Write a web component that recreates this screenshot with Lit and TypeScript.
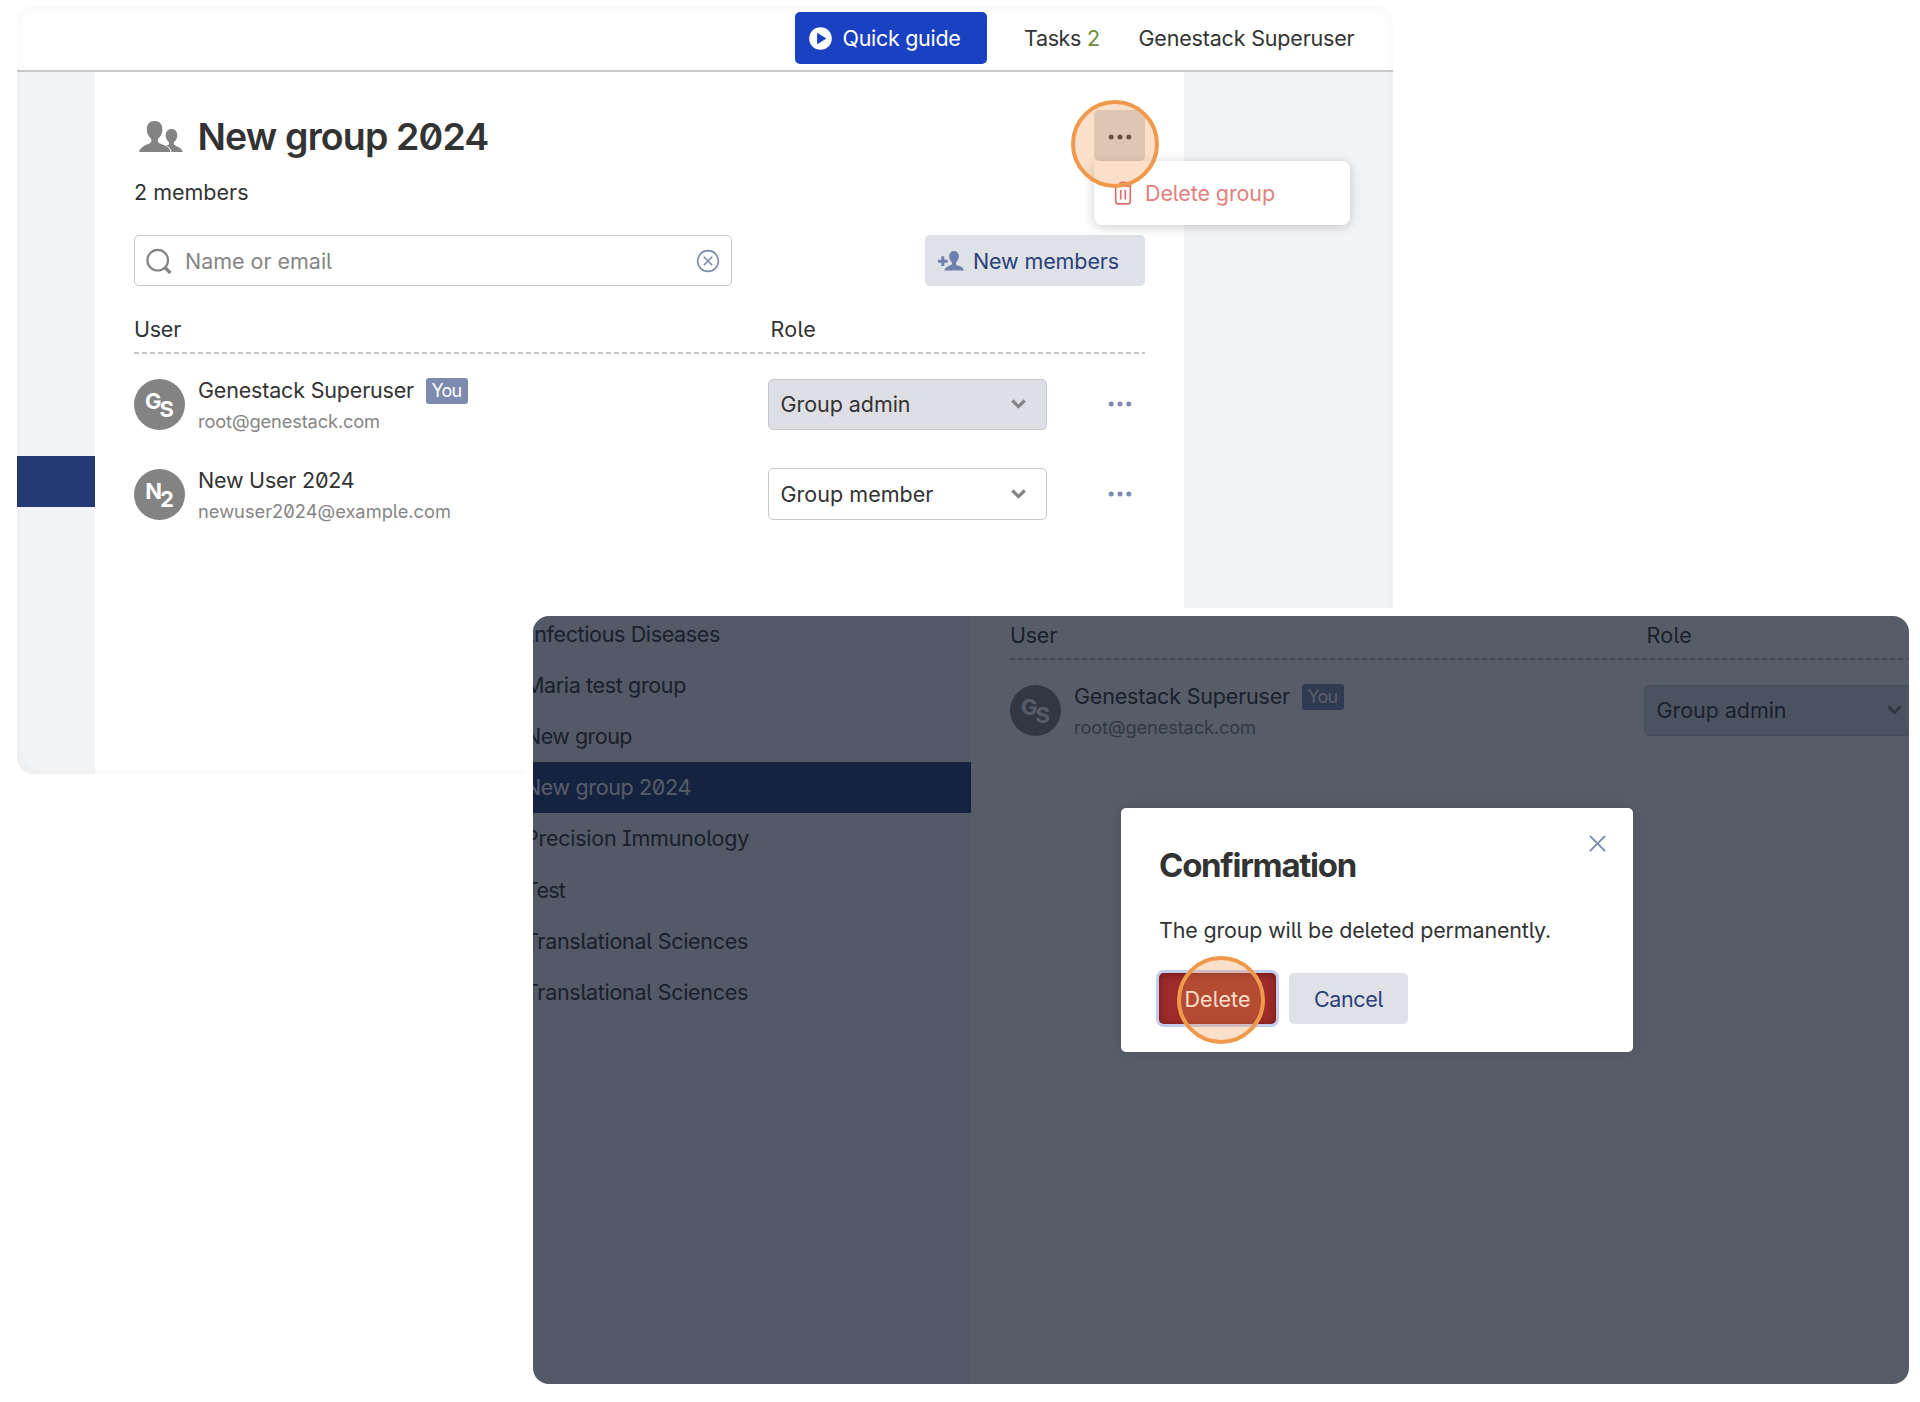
import { LitElement, html, css, svg, nothing } from "lit";
import { customElement, property, query } from "lit/decorators.js";
import { classMap } from "lit/directives/class-map.js";

/** One line of text whose tracking is set so that it spans a given width. */
@customElement("fit-text")
class FitText extends LitElement {
  @property() text = "";
  @property({ type: Number }) w = 0;
  @query(".t") span!: HTMLSpanElement;
  static styles = css`
    :host { display: inline-block; white-space: pre; flex: none; }
  `;
  updated() {
    if (!this.w) return;
    this.span.style.letterSpacing = "0px";
    const natural = this.span.getBoundingClientRect().width;
    this.span.style.letterSpacing = `${(this.w - natural) / this.text.length}px`;
  }
  render() {
    return html`<span class="t">${this.text}</span>`;
  }
}

const t = (text: string, w = 0) => html`<fit-text .text=${text} .w=${w}></fit-text>`;

const dots = html`<svg width="24" height="8" viewBox="0 0 24 8" fill="currentColor">
  <circle cx="3.2" cy="4" r="2.500" /><circle cx="12" cy="4" r="2.500" /><circle cx="20.8" cy="4" r="2.500" />
</svg>`;

const person = svg`<path d="M15.600 0c5 0 7.800 3.400 7.800 8.200 0 3.800-1.500 6.600-3.300 8.500-1 1.100-1.300 1.800-1.300 3.100 0 2 1.700 2.900 4.500 3.800 4.400 1.400 7.200 3 8.300 7.400H0c.6-3.200 3.400-5.400 7.900-7.400 3-1.300 4.500-2 4.500-3.800 0-1.300-.3-2-1.300-3.100-1.800-1.900-3.300-4.700-3.300-8.500C7.800 3.400 10.600 0 15.600 0z"/>`;

interface Member {
  initials: [string, string];
  name: string;
  nameW: number;
  email: string;
  emailW: number;
  you?: boolean;
  role: string;
  roleW: number;
}

const root: Member = {
  initials: ["G", "S"], name: "Genestack Superuser", nameW: 216, email: "root@genestack.com", emailW: 182,
  you: true, role: "Group admin", roleW: 130,
};
const newUser: Member = {
  initials: ["N", "2"], name: "New User 2024", nameW: 156.500, email: "newuser2024@example.com", emailW: 253,
  role: "Group member", roleW: 153,
};

@customElement("member-table")
class MemberTable extends LitElement {
  @property({ attribute: false }) members: Member[] = [];
  static styles = css`
    :host { display: block; width: 1011px; }
    .head { display: flex; height: 46px; align-items: center; }
    .head .user { width: 636.500px; }
    .rule { height: 1.6px; background: repeating-linear-gradient(90deg, #c6c7ce 0 5px, transparent 5px 8px); }
    .rows { display: flex; flex-direction: column; gap: 38.600px; padding-top: 25.400px; }
    .row { display: flex; height: 51px; align-items: center; }
    .avatar {
      width: 51px; height: 51px; border-radius: 50%; background: #838383; color: #fff;
      display: flex; align-items: center; justify-content: center; font-weight: 700; font-size: 22px; line-height: 26px;
    }
    .first { margin-top: -6px; }
    .second { margin: 9px 0 0 -2px; }
    .who { width: 569.500px; margin-left: 13px; height: 58px; margin-top: 5px; }
    .line { display: flex; height: 26px; align-items: center; }
    .line > fit-text { margin-top: -2px; }
    .badge {
      margin-left: 11.500px; width: 42px; height: 26px; border-radius: 3px; background: #7d8bb1; color: #fff;
      font-size: 18px; display: flex; align-items: center; justify-content: center;
    }
    .email { display: flex; align-items: center; height: 24px; margin-top: 5px; font-size: 18.300px; color: #858585; }
    .select {
      box-sizing: border-box; width: 279px; height: 51.500px; border: 1.500px solid #c6c7ce; border-radius: 5px;
      background: #fff; display: flex; align-items: center; justify-content: space-between; padding: 0 20px 0 12px;
    }
    .select.off { background: #dedfe4; }
    .more { margin-left: 61px; color: #7d8bb1; display: flex; }
  `;
  render() {
    return html`
      <div class="head"><div class="user">${t("User", 47)}</div>${t("Role", 45.5)}</div>
      <div class="rule"></div>
      <div class="rows">
        ${this.members.map((m) => html`
          <div class="row">
            <div class="avatar"><span class="first">${m.initials[0]}</span><span class="second">${m.initials[1]}</span></div>
            <div class="who">
              <div class="line">${t(m.name, m.nameW)}${m.you ? html`<span class="badge">${t("You", 30)}</span>` : nothing}</div>
              <div class="email">${t(m.email, m.emailW)}</div>
            </div>
            <div class=${classMap({ select: true, off: !!m.you })}>
              ${t(m.role, m.roleW)}
              <svg width="15" height="10" viewBox="0 0 15 10" fill="none" stroke="#858585" stroke-width="3.200"><path d="M1.300 1.500 7.500 7.600 13.700 1.500" /></svg>
            </div>
            <div class="more">${dots}</div>
          </div>`)}
      </div>`;
  }
}

@customElement("app-root")
class AppRoot extends LitElement {
  static styles = css`
    :host {
      display: block; position: relative; width: 1920px; height: 1402px; overflow: hidden; background: #fff; color: #333;
      font-family: Inter, Roboto, "Liberation Sans", sans-serif; font-size: 21.500px; line-height: 26px;
      font-feature-settings: "zero", "cv05", "cv08";
    }
    .window { position: absolute; width: 1376px; height: 768px; border-radius: 16px; overflow: hidden; box-sizing: border-box; }
    .back { left: 17px; top: 6px; background: #fff; }
    .back::after { content: ""; position: absolute; inset: 0; border-radius: 16px; box-shadow: inset 0 0 14px rgba(0, 0, 0, 0.045); pointer-events: none; }
    .halo { position: absolute; left: 525px; top: 608px; width: 1395px; height: 794px; background: #fff; border-radius: 16px 0 0 0; }
    .front { left: 533px; top: 616px; background: #fff; display: flex; }

    .topbar { height: 64px; border-bottom: 2px solid #c8c8cd; display: flex; align-items: center; padding-left: 778px; }
    .guide {
      box-sizing: border-box; width: 191.500px; height: 52px; border-radius: 5px; background: #1a41c2; color: #fff;
      display: flex; align-items: center; gap: 11px; padding-left: 13.500px;
    }
    .tasks { margin-left: 37.500px; display: flex; gap: 6px; }
    .count { color: #6b8e3c; }
    .account { margin-left: 38.500px; }

    .body { display: flex; height: 702px; }
    .left { width: 78px; background: #f3f4f6; }
    .mark { margin-top: 384px; height: 51px; background: #243a76; }
    .right { width: 209px; background: #f3f4f6; }
    .main { width: 1089px; box-sizing: border-box; padding: 38px 39px 0; }
    .title { display: flex; align-items: center; height: 51px; position: relative; }
    .title .groupicon { margin: 2px 0 0 4.500px; width: 44px; height: 31px; }
    h1 { margin: 2px 0 0 15px; font-size: 37.500px; line-height: 46px; font-weight: 600; }
    .menubtn {
      margin-left: auto; width: 51px; height: 51px; border-radius: 5px; background: #d9dbe0; display: flex; align-items: center; justify-content: center;
    }
    .menubtn svg { margin-top: 2px; }
    .menu {
      position: absolute; z-index: 1; left: 960px; top: 51px; width: 256px; height: 64px; box-sizing: border-box; background: #fff; border-radius: 0 8px 8px 8px;
      box-shadow: 0 2px 12px rgba(0, 0, 0, 0.2); display: flex; align-items: center; padding-left: 20px; gap: 13px; color: #e2807e;
    }
    .ring {
      position: absolute; z-index: 2; width: 88px; height: 88px; box-sizing: border-box; border: 4px solid #f0994c;
      border-radius: 50%; background: rgba(238, 149, 77, 0.3);
    }
    .title .ring { left: 937px; top: -10px; }
    .count-line { height: 62px; display: flex; align-items: center; margin-bottom: 12px; }
    .tools { display: flex; justify-content: space-between; height: 51px; margin-bottom: 20px; }
    .search {
      box-sizing: border-box; width: 598px; border: 1.500px solid #c6c7ce; border-radius: 5px; display: flex; align-items: center;
      padding: 0 11px; color: #858585;
    }
    .search fit-text { margin-left: 13px; margin-right: auto; }
    .add {
      box-sizing: border-box; width: 220px; border-radius: 5px; background: #dee1e6; color: #2b3f7c; display: flex; align-items: center;
      padding-left: 13px; gap: 9px;
    }

    .side { width: 438px; flex: none; background: #f3f4f6; }
    .groups { margin-top: -8px; }
    .group { height: 51.200px; display: flex; align-items: center; }
    .group fit-text { margin-left: -8px; }
    .group.on { background: #243a76; color: #fff; }
    .panel { flex: none; padding-left: 39px; }
    .panel member-table { margin-top: -4px; }
    .veil { position: absolute; inset: 0; background: rgba(16, 24, 41, 0.706); }
    .modal {
      position: absolute; left: 588px; top: 192px; width: 512px; height: 244px; box-sizing: border-box; background: #fff; border-radius: 5px;
      padding: 38px 38px 0; box-shadow: 0 0 16px rgba(0, 0, 0, 0.08);
    }
    .modal h2 { margin: 0; font-size: 33px; line-height: 38px; font-weight: 700; height: 38px; }
    .modal p { margin: 33px 0 0; height: 26px; }
    .actions { display: flex; gap: 13px; margin-top: 30px; }
    .btn { height: 51px; border-radius: 5px; display: flex; align-items: center; justify-content: center; }
    .delete { width: 117px; background: #9d2b29; color: #fff; box-shadow: 0 0 0 3px #c4ccee, inset 0 1px 7px rgba(60, 0, 0, 0.5); }
    .cancel { width: 119px; background: #dee1e6; color: #2b3f7c; }
    .close { position: absolute; left: 468px; top: 27px; }
    .modal .ring { left: 56px; top: 148px; }
  `;

  groups: [string, number][] = [
    ["Infectious Diseases", 195], ["Maria test group", 161], ["New group", 107], ["New group 2024", 166],
    ["Precision Immunology", 224], ["Test", 40], ["Translational Sciences", 223], ["Translational Sciences", 223],
  ];

  render() {
    return html`
      <section class="window back">
        <header class="topbar">
          <div class="guide">
            <svg width="23" height="23" viewBox="0 0 23 23"><circle cx="11.500" cy="11.500" r="11.300" fill="#fff" /><path d="M8.600 6.500v10l8-5z" fill="#1a41c2" stroke="#1a41c2" stroke-width="1" stroke-linejoin="round" /></svg>
            ${t("Quick guide", 118)}
          </div>
          <div class="tasks">${t("Tasks", 57)}<span class="count">${t("2", 13)}</span></div>
          <div class="account">${t("Genestack Superuser", 216)}</div>
        </header>
        <div class="body">
          <div class="left"><div class="mark"></div></div>
          <div class="main">
            <div class="title">
              <svg class="groupicon" viewBox="0 0 44 31" fill="#838383">
                ${person}
                <path d="M32.500 8c3.700 0 5.800 2.600 5.800 6.200 0 2.700-1.200 4.800-2.600 6.200-.8.800-.9 1.300-.9 2.200 0 1.300 1.300 2 3.300 2.800 3.300 1.300 5 2.600 5.700 5.600H32.600c-.7-3.400-2.600-5.200-5.400-6.400 2-.5 3-1 3-2 0-.9-.1-1.400-.9-2.200-1.400-1.400-2.600-3.500-2.600-6.200C26.700 10.600 28.800 8 32.500 8z" />
              </svg>
              <h1>${t("New group 2024", 291)}</h1>
              <div class="menubtn">${dots}</div>
              <div class="menu">
                <svg width="18" height="24" viewBox="0 0 18 24" fill="none" stroke="#dd6e6c" stroke-width="1.700">
                  <path d="M.6 5.200h16.800M5.800 5V3.400C5.800 1.900 6.900 1 9 1s3.200.9 3.200 2.400V5M1.700 5.500v14.700c0 1.700 1 2.700 2.600 2.700h9.400c1.600 0 2.600-1 2.600-2.700V5.500M6.700 9v9.500M11.300 9v9.500" />
                </svg>
                ${t("Delete group", 130)}
              </div>
              <div class="ring"></div>
            </div>
            <div class="count-line">${t("2 members", 114.5)}</div>
            <div class="tools">
              <div class="search">
                <svg width="26" height="26" viewBox="0 0 26 26" fill="none" stroke="#838383"><circle cx="11.700" cy="12.200" r="10.300" stroke-width="2.200" /><path d="m18.600 19.100 5.800 5.800" stroke-width="3.400" /></svg>
                ${t("Name or email", 147)}
                <svg width="24" height="24" viewBox="0 0 24 24" fill="none" stroke="#7d8bb1" stroke-width="1.600"><circle cx="12" cy="12" r="10.400" /><path d="m7.800 7.800 8.400 8.400m0-8.400-8.400 8.400" /></svg>
              </div>
              <div class="add">
                <svg width="26" height="20" viewBox="0 0 26 20" fill="#6f80ad"><path d="M3.300 5.300h3v3.400h3.400v3H6.300v3.400h-3v-3.400H0v-3h3.300z" /><g transform="translate(6.300 0) scale(.620 .630)">${person}</g></svg>
                ${t("New members", 146)}
              </div>
            </div>
            <member-table .members=${[root, newUser]}></member-table>
          </div>
          <div class="right"></div>
        </div>
      </section>
      <div class="halo"></div>
      <section class="window front">
        <div class="side">
          <div class="groups">
            ${this.groups.map(([g, w], i) => html`<div class=${classMap({ group: true, on: i === 3 })}>${t(g, w)}</div>`)}
          </div>
        </div>
        <div class="panel"><member-table .members=${[root]}></member-table></div>
        <div class="veil"></div>
        <div class="modal">
          <h2>${t("Confirmation", 197)}</h2>
          <svg class="close" width="17" height="17" viewBox="0 0 17 17" fill="none" stroke="#7d8bb1" stroke-width="1.900" stroke-linecap="round"><path d="m1.400 1.400 14.200 14.200m0-14.200L1.400 15.600" /></svg>
          <p>${t("The group will be deleted permanently.", 392)}</p>
          <div class="actions">
            <div class="btn delete">${t("Delete", 66)}</div>
            <div class="btn cancel">${t("Cancel", 69)}</div>
          </div>
          <div class="ring"></div>
        </div>
      </section>`;
  }
}
